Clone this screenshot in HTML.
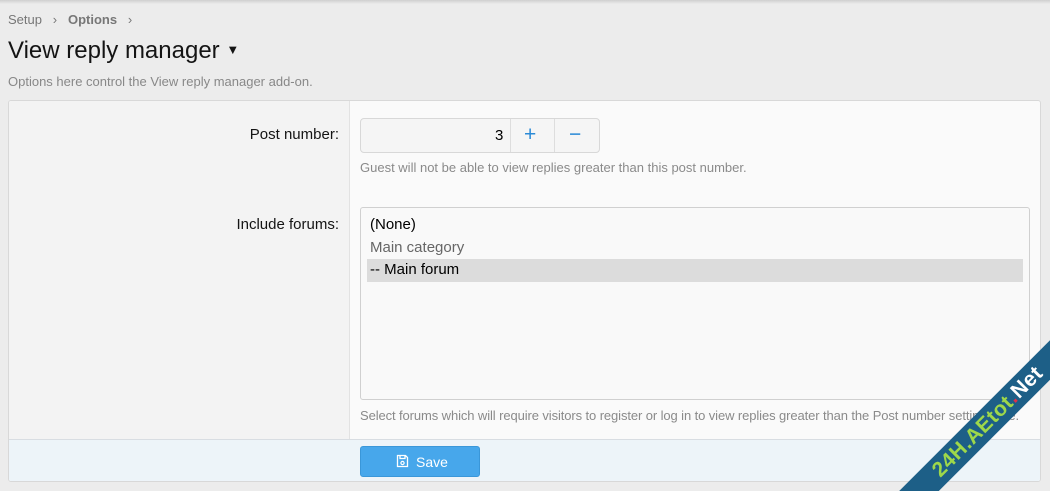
<!DOCTYPE html><html style="overflow:hidden"><head><style>
html,body{overflow:hidden}
body{margin:0;width:1050px;height:491px;background:#ececec;font-family:"Liberation Sans",sans-serif;position:relative}
.top{position:absolute;left:0;top:0;width:1050px;height:4px;background:linear-gradient(#cfcfcf,#ececec)}
.bc{position:absolute;left:8px;top:12px;font-size:13px;color:#777}
.bc b{color:#777}
h1{position:absolute;left:8px;top:37px;margin:0;font-size:24px;font-weight:normal;color:#141414}
.desc{position:absolute;left:8px;top:74px;font-size:13px;color:#888}
.panel{position:absolute;left:8px;top:100px;width:1031px;height:380px;border:1px solid #d8d8d8;border-radius:3px;background:#fafafa;overflow:hidden}
.lc{position:absolute;left:0;top:0;width:340px;height:338px;background:#f3f3f3;border-right:1px solid #e2e2e2}
.lbl{position:absolute;right:701px;font-size:15px;color:#141414}
.inp{position:absolute;left:351px;top:17px;width:238px;height:33px;border:1px solid #d8d8d8;border-radius:4px;background:#f5f5f5}
.inp span{position:absolute;font-size:15px}
.hint{position:absolute;left:351px;font-size:13px;color:#8a8a8a}
.sel{position:absolute;left:351px;top:106px;width:668px;height:191px;border:1px solid #d0d0d0;border-radius:3px;background:#f9f9f9}
.sel div{height:22.5px;line-height:22px;padding-left:3px;font-size:15px;margin:0 6px}
.foot{position:absolute;left:0;top:338px;width:100%;height:42px;background:#edf4f9;border-top:1px solid #d8dde2}
.btn{position:absolute;left:351px;top:6px;width:118px;height:29px;background:#47a7eb;border:1px solid #3a97d9;border-radius:3px;color:#fff;font-size:14px}
.clip{position:absolute;left:0;top:0;width:1050px;height:491px;overflow:hidden}
</style></head><body>
<div class="top"></div>
<div class="bc">Setup &nbsp;&nbsp;›&nbsp;&nbsp; <b>Options</b> &nbsp;&nbsp;›</div>
<h1>View reply manager <span style="font-size:13px;position:relative;top:-4px">▼</span></h1>
<div class="desc">Options here control the View reply manager add-on.</div>
<div class="panel">
<div class="lc"></div>
<div class="lbl" style="top:25px">Post number:</div>
<div class="inp"><span style="left:134px;top:8px">3</span>
<div style="position:absolute;left:149px;top:0;width:1px;height:33px;background:#ddd"></div>
<div style="position:absolute;left:193px;top:0;width:1px;height:33px;background:#ddd"></div>
<span style="left:163px;top:4px;color:#2b8ad6;font-size:21px">+</span>
<span style="left:208px;top:4px;color:#2b8ad6;font-size:21px">−</span></div>
<div class="hint" style="top:59px">Guest will not be able to view replies greater than this post number.</div>
<div class="lbl" style="top:115px">Include forums:</div>
<div class="sel"><div style="margin-top:6px">(None)</div><div style="color:#666">Main category</div><div style="background:#dcdcdc">-- Main forum</div></div>
<div class="hint" style="top:307px;letter-spacing:-0.1px">Select forums which will require visitors to register or log in to view replies greater than the Post number setting here.</div>
<div class="foot"><div class="btn"><svg style="position:absolute;left:35px;top:7px" width="13" height="14" viewBox="0 0 13 14"><path d="M1.5 1.5h8l2 2v9h-10z M4 1.5v3h5v-3" fill="none" stroke="#fff" stroke-width="1.3"/><circle cx="6.5" cy="9" r="1.6" fill="none" stroke="#fff" stroke-width="1.2"/></svg><span style="position:absolute;left:55px;top:7px">Save</span></div></div>
</div>
<div class="clip"><div style="position:absolute;left:853px;top:408px;width:270px;height:28px;background:#1d5f87;transform:rotate(-45deg);transform-origin:center;color:#fff;font-weight:bold;font-size:21px;line-height:28px;text-align:center;letter-spacing:0.5px"><span style="color:#9ed84a">24H.AEtot</span><span style="color:#e0304a">.</span>Net</div></div>
</body></html>
